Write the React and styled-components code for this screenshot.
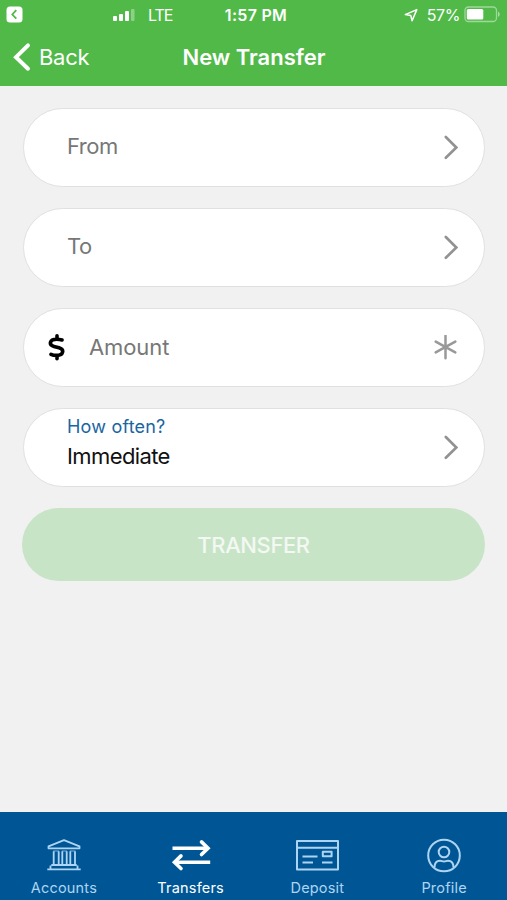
import React from "react";
import styled, { createGlobalStyle } from "styled-components";

const fields = [
    { id: 'from', label: 'From' },
    { id: 'to', label: 'To' },
    { id: 'amount', label: 'Amount', currency: true, required: true },
    { id: 'frequency', label: 'How often?', value: 'Immediate' },
];

const SignalIcon = () => (
    <svg width="24" height="16" viewBox="0 0 24 16" fill="#fff">
        <rect x="1" y="9" width="4" height="5" rx="1"/>
        <rect x="7" y="7" width="4" height="7" rx="1"/>
        <rect x="13" y="4" width="4" height="10" rx="1"/>
        <rect x="19" y="2" width="3.500" height="12" rx="1" opacity="0.35"/>
    </svg>
);

const ReturnIcon = () => (
    <svg width="17" height="17" viewBox="0 0 17 17">
        <rect x="0.500" y="0.500" width="16" height="16" rx="3.500" fill="#fff"/>
        <path d="M10.300 4.200 6.300 8.500l4 4.200" fill="none" stroke="#51b948" strokeWidth="1.800"/>
    </svg>
);

const LocationIcon = () => (
    <svg width="14" height="14" viewBox="0 0 14 14" fill="none" stroke="#fff" strokeWidth="1.500" strokeLinejoin="round">
        <path d="M12.800 1.600 1.300 6.600l5.500 1 1.300 5.200Z"/>
    </svg>
);

const BatteryIcon = () => (
    <svg width="37" height="17" viewBox="0 0 37 17">
        <rect x="1" y="1" width="31.500" height="14.500" rx="3.500" fill="none" stroke="#fff" strokeOpacity="0.45" strokeWidth="1.300"/>
        <rect x="2.800" y="3" width="16.500" height="10.500" rx="1.500" fill="#fff"/>
        <path d="M34 5.800c2.200.6 2.200 4.400 0 5Z" fill="#fff" opacity="0.5"/>
    </svg>
);

const BackIcon = () => (
    <svg width="20" height="30" viewBox="0 0 20 30" fill="none" stroke="#fff" strokeWidth="4" strokeLinecap="round">
        <path d="M16 3.300 4 15.200 16 26.700" strokeLinejoin="miter"/>
    </svg>
);

const ChevronIcon = () => (
    <svg width="14" height="26" viewBox="0 0 14 26" fill="none" stroke="#929292" strokeWidth="2.600" strokeLinecap="round">
        <path d="M1.800 2 12.300 12.500 1.800 22.800"/>
    </svg>
);

const AsteriskIcon = () => (
    <svg width="24" height="26" viewBox="0 0 24 26" fill="none" stroke="#999" strokeWidth="2.500" strokeLinecap="round">
        <path d="M11.500.8v22.400M1.700 6.600l19.600 10.800M1.700 17.400 21.300 6.600"/>
    </svg>
);

const DollarIcon = () => (
    <svg width="18" height="28" viewBox="0 0 18 28" fill="none" stroke="#000" strokeWidth="3.600" strokeLinecap="round">
        <path d="M14 5.900C12.300 5.400 11 5.200 8.500 5.200 1.300 5.200.6 11 6 12.400l5 1.300c5.700 1.700 4.500 7.700-2 7.700-2.700 0-4.500-.3-6-1.100M9 1.800v3M9 21.800v3"/>
    </svg>
);

const AccountsIcon = () => (
    <svg width="36" height="34" viewBox="0 0 36 34" fill="none" stroke="currentColor" strokeWidth="1.800" strokeLinejoin="round">
        <path d="M18 2.200 2.500 8.300v2h31v-2ZM5.300 27h25.400M4.500 27.500v3.500M31.500 27.500v3.500M1.300 31.300h33.400"/>
        <path d="M7.700 13.200v13M12.700 13.200v13M16.300 13.200v13M20.700 13.200v13M24.300 13.200v13M29 13.200v13"/>
        <path d="M7.300 13h5.800M15.900 13h5.200M23.900 13h5.500" strokeWidth="0.700"/>
    </svg>
);

const TransfersIcon = () => (
    <svg width="40" height="34" viewBox="0 0 40 34" fill="none" stroke="currentColor" strokeWidth="3.600" strokeLinejoin="miter">
        <path d="M1.500 10.200h35M39.200 24.200H3.500"/>
        <path d="M30.500 3.900l6.500 6.300-6.500 6.300M10 17.900l-6.500 6.300 6.500 6.300" strokeLinecap="round"/>
    </svg>
);

const DepositIcon = () => (
    <svg width="44" height="34" viewBox="0 0 44 34" fill="none" stroke="currentColor" strokeWidth="2" strokeLinejoin="round">
        <path d="M2 3h41v28.600H2ZM2 9.800h41"/>
        <path d="M7.500 18.500H22.500M7.500 24.500h10.500M27 24.500h10.500M27.800 13.800h8.800v4.400h-8.800Z" strokeWidth="2"/>
    </svg>
);

const ProfileIcon = () => (
    <svg width="36" height="36" viewBox="0 0 36 36" fill="none" stroke="currentColor" strokeWidth="2">
        <circle cx="18" cy="18.500" r="15.800"/>
        <circle cx="18" cy="15" r="5.300"/>
        <path d="M8.500 30.500c0-4.800 2.300-6.800 5.500-6.800 1.600 0 2.300.8 4 .8s2.400-.8 4-.8c3.200 0 5.500 2 5.500 6.800"/>
    </svg>
);

const tabs = [
    { label: 'Accounts', icon: <AccountsIcon/> },
    { label: 'Transfers', icon: <TransfersIcon/>, active: true },
    { label: 'Deposit', icon: <DepositIcon/> },
    { label: 'Profile', icon: <ProfileIcon/> },
];

const App = () => {
    return (
        <Screen>
            <GlobalStyle/>

            <Header>
                <StatusBar>
                    <StatusLeft>
                        <ReturnIcon/>
                        <Carrier>
                            <SignalIcon/>
                            <span>LTE</span>
                        </Carrier>
                    </StatusLeft>
                    <Clock>1:57 PM</Clock>
                    <StatusRight>
                        <LocationIcon/>
                        <BatteryLevel>57%</BatteryLevel>
                        <BatteryIcon/>
                    </StatusRight>
                </StatusBar>

                <NavBar>
                    <BackButton>
                        <BackIcon/>
                        <span>Back</span>
                    </BackButton>
                    <Title>New Transfer</Title>
                </NavBar>
            </Header>

            <Form>
                {fields.map((f) => {
                    return (
                        <Field key={f.id} $currency={f.currency}>
                            {f.currency && <DollarIcon/>}
                            {f.value
                                ? <FieldText>
                                    <FieldCaption>{f.label}</FieldCaption>
                                    <FieldValue>{f.value}</FieldValue>
                                  </FieldText>
                                : <Placeholder $wide={f.currency}>{f.label}</Placeholder>
                            }
                            {f.required ? <AsteriskIcon/> : <ChevronIcon/>}
                        </Field>
                    )
                })}
                <SubmitButton disabled>TRANSFER</SubmitButton>
            </Form>

            <TabBar>
                {tabs.map((t) => {
                    return (
                        <Tab key={t.label} $active={t.active}>
                            <TabIcon>{t.icon}</TabIcon>
                            <TabLabel>{t.label}</TabLabel>
                        </Tab>
                    )
                })}
            </TabBar>
        </Screen>
    )
}

export default App;

const GlobalStyle = createGlobalStyle`
    * {
        box-sizing: border-box;
    }

    body {
        margin: 0;
        font-family: Inter, "Liberation Sans", sans-serif;
    }

    svg {
        display: block;
        flex-shrink: 0;
    }
`;

const Screen = styled.div`
    display: flex;
    flex-direction: column;
    height: 100vh;
    background-color: #f1f1f1;
`;

const Header = styled.header`
    height: 86px;
    color: #fff;
    background-color: #51b948;
`;

const StatusBar = styled.div`
    display: grid;
    grid-template-columns: 1fr auto 1fr;
    align-items: center;
    height: 29px;
    padding: 0 6px;
    font-size: 16px;
    line-height: 20px;
`;

const StatusLeft = styled.div`
    display: flex;
    align-items: center;
    gap: 89px;
`;

const Carrier = styled.div`
    display: flex;
    align-items: center;
    gap: 12px;
    letter-spacing: -1.1px;
`;

const Clock = styled.div`
    padding-left: 5px;
    font-weight: 600;
    letter-spacing: 0.3px;
`;

const StatusRight = styled.div`
    display: flex;
    align-items: center;
    justify-content: flex-end;
`;

const BatteryLevel = styled.span`
    margin: 0 4px 0 9px;
    letter-spacing: -0.4px;
`;

const NavBar = styled.nav`
    display: grid;
    grid-template-columns: 1fr auto 1fr;
    align-items: center;
    height: 56px;
    padding: 0 12px;
`;

const BackButton = styled.button`
    display: flex;
    align-items: center;
    gap: 7px;
    padding: 0;
    border: none;
    background: none;
    color: inherit;
    font: inherit;
    font-size: 22px;
    letter-spacing: -0.3px;
`;

const Title = styled.h1`
    margin: 0;
    padding-left: 1px;
    font-size: 22px;
    font-weight: 600;
    letter-spacing: 0;
`;

const Form = styled.main`
    display: flex;
    flex: 1;
    flex-direction: column;
    gap: 21px;
    padding: 22px 22px 0 23px;
`;

const Field = styled.div`
    display: flex;
    align-items: center;
    gap: ${(props) => (props.$currency ? '23px' : '0')};
    height: 79px;
    padding: 0 26px 0 ${(props) => (props.$currency ? '24px' : '43px')};
    border: 1px solid #dfe1e1;
    border-radius: 40px;
    background-color: #fff;
`;

const Placeholder = styled.span`
    flex: 1;
    padding-bottom: ${(props) => (props.$wide ? '2px' : '3px')};
    color: #777;
    font-size: 22px;
    letter-spacing: ${(props) => (props.$wide ? '-0.1px' : '-0.5px')};
`;

const FieldText = styled.div`
    display: flex;
    flex: 1;
    flex-direction: column;
    padding-bottom: 9px;
`;

const FieldCaption = styled.span`
    color: #19659f;
    font-size: 18px;
    line-height: 27px;
    letter-spacing: 0.2px;
`;

const FieldValue = styled.span`
    color: #111;
    font-size: 22px;
    line-height: 33px;
    letter-spacing: -0.6px;
`;

const SubmitButton = styled.button`
    height: 73px;
    margin-left: -1px;
    border: none;
    border-radius: 37px;
    background-color: #c8e4c7;
    color: #f3f8f3;
    font-family: inherit;
    font-size: 22px;
    font-weight: 500;
    letter-spacing: -0.4px;
`;

const TabBar = styled.nav`
    display: grid;
    grid-template-columns: repeat(4, 1fr);
    height: 88px;
    padding-top: 25px;
    background-color: #005695;
`;

const Tab = styled.div`
    display: flex;
    flex-direction: column;
    align-items: center;
    padding-left: 1px;
    color: ${(props) => (props.$active ? '#fff' : '#add5f3')};
`;

const TabIcon = styled.div`
    display: flex;
    align-items: center;
    height: 36px;
`;

const TabLabel = styled.span`
    margin-top: 6px;
    font-size: 14.5px;
    line-height: 18px;
    letter-spacing: 0.2px;
`;
